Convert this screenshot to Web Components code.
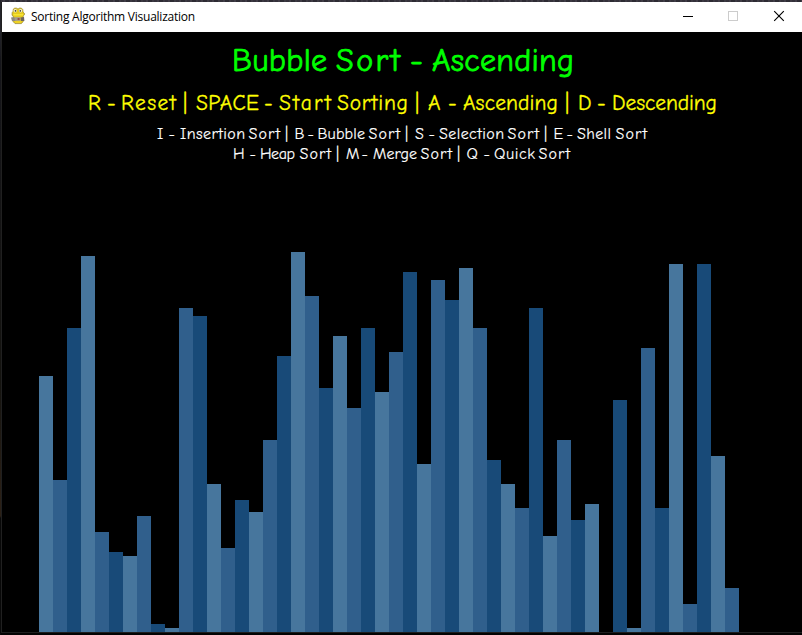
<!DOCTYPE html>
<html lang="en">
<head>
<meta charset="utf-8">
<title>Sorting Algorithm Visualization</title>
<style>
html,body{margin:0;height:100%;overflow:hidden;background:#08080a}
</style>
</head>
<body>
<app-window>
  <title-bar slot="bar">Sorting Algorithm Visualization</title-bar>
  <text-line color="#00ff00" size="32" weight=".75" h="56" base="39" text="Bubble Sort - Ascending" spans="232-327 336-400 410 432-574"></text-line>
  <text-line color="#ffff00" size="21.5" weight=".3" h="34" base="22" text="R - Reset | SPACE - Start Sorting | A - Ascending | D - Descending" spans="88 107 121-176 183 196-259 264 279-331 337-408 415 428 448 463-558 565 578 597 612-717"></text-line>
  <text-line color="#ffffff" size="16" weight=".15" h="20" base="17" text="I - Insertion Sort | B - Bubble Sort | S - Selection Sort | E - Shell Sort" spans="157 168.5 180-245 248.5-280 285 294.5 307.5 317.5-365 368.5-400 405 415 428.5 439-504 507.5-539 544 553.5 566.5 577-611 615.5-647"></text-line>
  <text-line color="#ffffff" size="16" weight=".15" h="20" base="17" text="H - Heap Sort | M - Merge Sort | Q - Quick Sort" spans="233 249.5 260-295 299.5-331 336 346 361.5 373-417 420.5-452 457 466.5 483.5 494-535 538.5-570"></text-line>
  <bar-chart values="64,38,76,94,25,20,19,29,2,1,81,79,37,21,33,30,48,69,95,84,61,74,56,76,60,70,90,42,88,83,91,76,43,37,31,81,24,48,28,32,0,58,1,71,31,92,7,92,44,11"></bar-chart>
</app-window>
<script>
class AppWindow extends HTMLElement {
  constructor() {
    super();
    this.attachShadow({mode: 'open'}).innerHTML = `
<style>
:host{display:grid;grid-template:2px 30px 600px 1px 2px / 1px 1px 800px;width:802px;height:635px;background:#030303}
.top{grid-area:1/1/2/4;background:repeating-linear-gradient(90deg,#34313a 0 3px,#403c46 3px 5px,#2d2b33 5px 9px,#3c3942 9px 11px)}
.left{grid-area:1/1/6/2;background:linear-gradient(#25252b 0 30px,#15151a 60px,#14130f 380px,#2b2016 500px 516px,#080808 518px)}
.edge{grid-area:2/2/5/3;background:#202020}
.bottom{grid-area:4/2/5/4;background:#1e1e1e}
.bar{grid-area:2/3/3/4;background:#fff}
.client{grid-area:3/3/4/4;background:#000;display:flex;flex-direction:column;min-height:0}
</style>
<div class="top"></div><div class="left"></div><div class="edge"></div><div class="bottom"></div>
<div class="bar"><slot name="bar"></slot></div>
<div class="client"><slot></slot></div>`;
  }
}
customElements.define('app-window', AppWindow);

class PetIcon extends HTMLElement {
  constructor() {
    super();
    this.attachShadow({mode: 'open'}).innerHTML = `
<style>:host{display:block;width:16px;height:18px}svg{display:block}</style>
<svg width="16" height="18" viewBox="0 0 16 18">
<path d="M3.4 2Q4.6 .6 6.6 1.2L8 2L9.8 1Q12 .8 12.8 2.6L13 5L14.8 7L13.4 8.8L13 10L13.2 14.4L11.4 16.6H5L3 14.4L3.4 9.8L2 8L2.2 5.6L3 4.4Z" fill="#e6cb1e" stroke="#94812a" stroke-width=".7"/>
<path d="M3.4 7H13.2V8.6H3.6Z" fill="#f7e534"/>
<circle cx="5.2" cy="3.7" r="1.7" fill="#efeed8"/><circle cx="10.6" cy="3.7" r="1.7" fill="#efeed8"/>
<circle cx="5.5" cy="3.9" r=".8" fill="#3b3626"/><circle cx="10.3" cy="3.9" r=".8" fill="#3b3626"/>
<path d="M1 10.4L4.4 10L5.8 14H2Z" fill="#8b8783"/><path d="M10.4 10.4L14 10L14.4 14H11Z" fill="#6d635c"/>
<rect x="4.8" y="10.2" width="5.6" height="3.6" fill="#a39b90"/><rect x="7.6" y="11" width="2" height="2" fill="#96504a"/>
<path d="M5 14.2H11V16H5Z" fill="#f0d326"/>
</svg>`;
  }
}
customElements.define('pet-icon', PetIcon);

class TitleBar extends HTMLElement {
  constructor() {
    super();
    this.attachShadow({mode: 'open'}).innerHTML = `
<style>
:host{display:flex;align-items:center;height:30px;color:#000;font:12px/16px "Open Sans","Noto Sans",sans-serif}
pet-icon{margin:0 5px 2px 8px}
.t{flex:1;white-space:nowrap;letter-spacing:-.24px}
svg{display:block;height:30px;flex:none}
</style>
<pet-icon></pet-icon><span class="t"><slot></slot></span>
<svg width="45" viewBox="0 0 45 30" shape-rendering="crispEdges"><path d="M18 14h10v1H18z"/></svg>
<svg width="46" viewBox="0 0 46 30" shape-rendering="crispEdges"><rect x="18.5" y="9.5" width="9" height="9" fill="none" stroke="#ccc"/></svg>
<svg width="46" viewBox="0 0 46 30"><path d="M18.2 9.2l9.6 9.6M27.8 9.2l-9.6 9.6" stroke="#000" stroke-width="1.15"/></svg>`;
  }
}
customElements.define('title-bar', TitleBar);

// One caption line; "spans" holds the window x range of each word.
class TextLine extends HTMLElement {
  connectedCallback() {
    const a = n => this.getAttribute(n);
    const spans = a('spans').split(' ');
    const words = a('text').split(' ').map((word, i) => {
      const [from, to] = spans[i].split('-').map(Number);
      const fit = to ? ` textLength="${to - from}" lengthAdjust="spacing"` : '';
      return `<tspan x="${from - 2}"${fit}>${word}</tspan>`;
    }).join(' ');
    this.attachShadow({mode: 'open'}).innerHTML = `
<style>
:host{display:block;flex:none;height:${a('h')}px}
svg{display:block;overflow:visible}
text{font:${a('size')}px "Comic Sans MS","Comic Neue",Lato,sans-serif;font-variant-ligatures:none;fill:${a('color')};stroke:${a('color')};stroke-width:${a('weight')}px}
</style>
<svg width="800" height="${a('h')}"><text y="${a('base')}">${words}</text></svg>`;
  }
}
customElements.define('text-line', TextLine);

class BarChart extends HTMLElement {
  connectedCallback() {
    this.attachShadow({mode: 'open'}).innerHTML = `
<style>
:host{display:flex;flex:1;align-items:flex-end;padding-left:37px}
i{width:14px;flex:none}
i:nth-of-type(3n+1){background:#47769d}
i:nth-of-type(3n+2){background:#305f8c}
i:nth-of-type(3n){background:#184a78}
</style>` + this.getAttribute('values').split(',').map(v => `<i style="height:${v * 4}px"></i>`).join('');
  }
}
customElements.define('bar-chart', BarChart);
</script>
</body>
</html>
